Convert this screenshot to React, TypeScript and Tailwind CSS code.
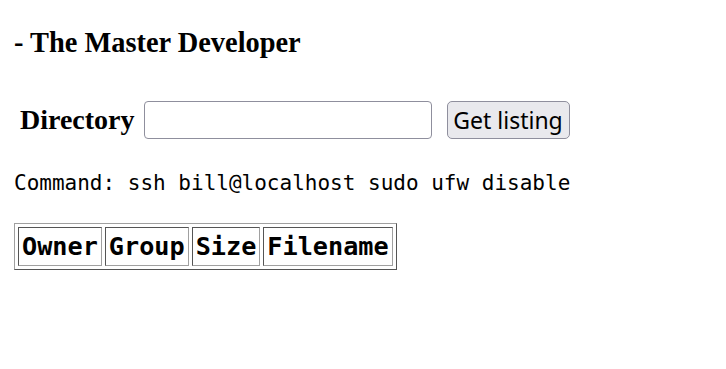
const headers = ["Owner", "Group", "Size", "Filename"];

export default function App() {
  return (
    <div className="min-h-screen bg-white p-[14px] text-black font-['Liberation_Serif',serif]">
      <h3 className="mt-[13px] text-[28.4px] font-bold leading-[32px]">- The Master Developer</h3>

      <form className="mt-[42px] flex items-center" onSubmit={(e) => e.preventDefault()}>
        <label className="ml-[6px] mr-[9px] text-[28px] font-bold leading-[32px]">Directory</label>
        <input
          type="text"
          className="h-[38px] w-[288px] rounded-[4px] border border-[#8f8f9d] bg-white px-2 outline-none"
        />
        <button
          type="button"
          className="ml-[15px] h-[38px] w-[123px] rounded-[5px] border border-[#8f8f9d] bg-[#e9e9ed] font-['Noto_Sans',sans-serif] text-[23px] leading-none text-black"
        >
          Get listing
        </button>
      </form>

      <p className="mt-[32px] font-['DejaVu_Sans_Mono',monospace] text-[21px] leading-[24px]">
        Command: ssh bill@localhost sudo ufw disable
      </p>

      <table className="mt-[28px] border-separate border-spacing-[3.5px] border border-t-[#a0a0a0] border-l-[#a0a0a0] border-r-[#555] border-b-[#555]">
        <thead>
          <tr>
            {headers.map((h) => (
              <th
                key={h}
                className="h-[39px] border border-t-[#555] border-l-[#555] border-r-[#a0a0a0] border-b-[#a0a0a0] px-[3px] text-left font-['DejaVu_Sans_Mono',monospace] text-[25.2px] font-bold leading-[30px]"
              >
                {h}
              </th>
            ))}
          </tr>
        </thead>
      </table>
    </div>
  );
}
